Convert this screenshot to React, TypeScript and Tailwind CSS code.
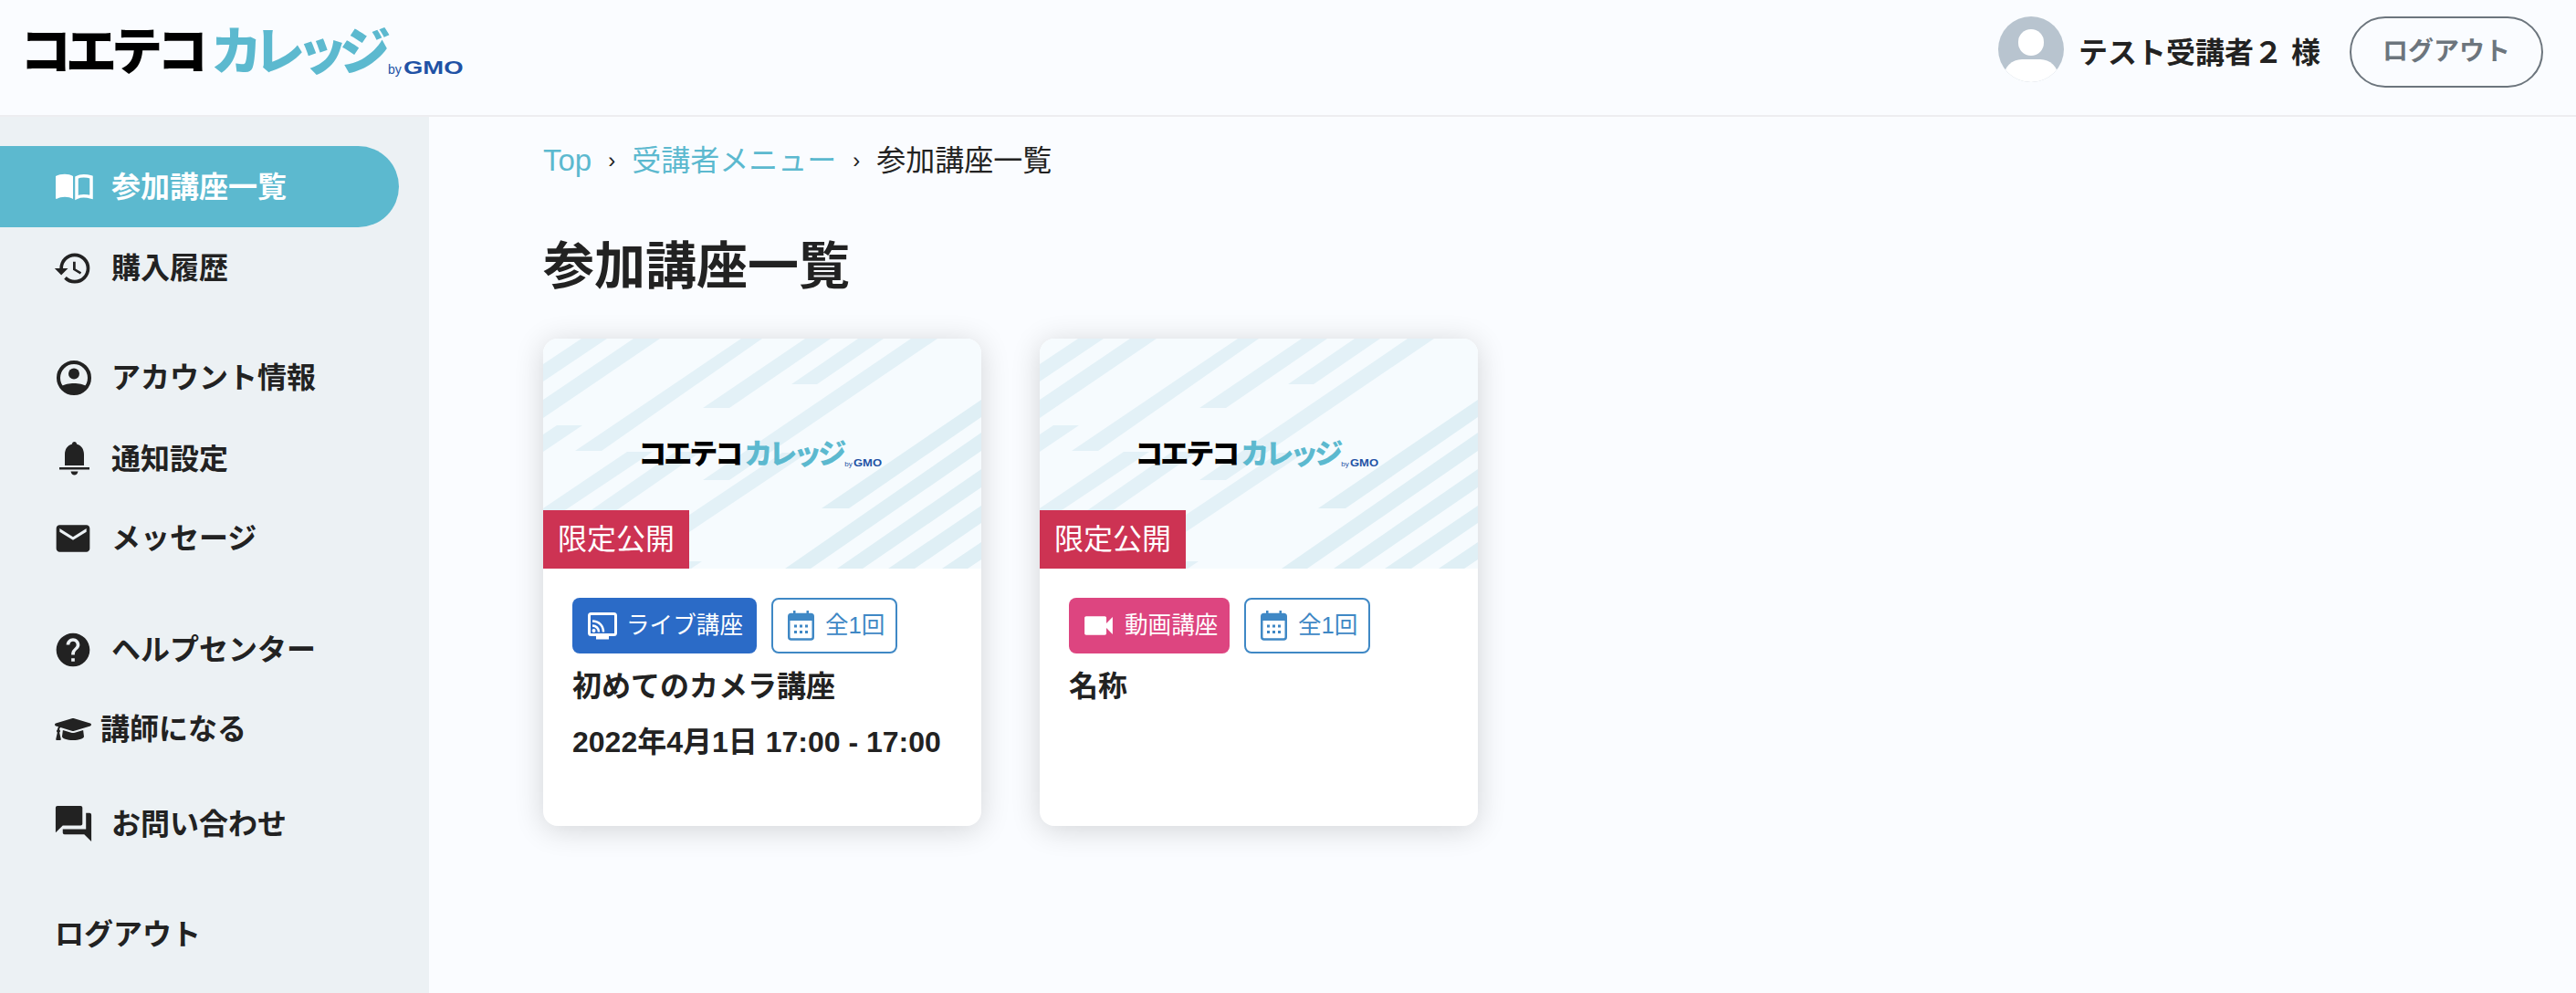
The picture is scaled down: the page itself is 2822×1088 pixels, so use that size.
import { MdHistory, MdEmail, MdHelp, MdForum, MdVideocam } from "react-icons/md";
import { FaGraduationCap } from "react-icons/fa";

function BookIcon() {
  return (
    <svg width="41" height="30" viewBox="0 0 41 30" className="shrink-0" aria-hidden="true">
      <path d="M0 3C6 0 14 0 19 3V28C14 25 6 25 1 28Q0 28 0 27Z" fill="#fff" />
      <path d="M23 4.5C27 2.5 33 2.5 39 4V26C33 24.500 27 24.500 23 26.500Z" fill="none" stroke="#fff" strokeWidth="3.500" />
    </svg>
  );
}

function AccountIcon() {
  return (
    <svg width="38" height="38" viewBox="0 0 38 38" className="shrink-0" fill="#222" aria-hidden="true">
      <circle cx="19" cy="19" r="17" fill="none" stroke="#222" strokeWidth="4" />
      <circle cx="19" cy="14.500" r="6" />
      <path d="M6 28C11 24 27 24 32 28C29 33 24 36 19 36C14 36 9 33 6 28Z" />
    </svg>
  );
}

function BellIcon() {
  return (
    <svg width="33" height="37" viewBox="0 0 33 37" className="shrink-0" fill="#222" aria-hidden="true">
      <path d="M16.500 0C18 0 19 1 19 2.500C24 4 27 8 27 14V26H6V14C6 8 9 4 14 2.500C14 1 15 0 16.500 0Z" />
      <rect x="0" y="28" width="33" height="2.500" />
      <path d="M12.500 32.500H20.500C20 35 18.500 36.500 16.500 36.500C14.500 36.500 13 35 12.500 32.500Z" />
    </svg>
  );
}

function CastIcon() {
  return (
    <svg width="32" height="30" viewBox="0 0 32 30" className="shrink-0" aria-hidden="true">
      <rect x="1.500" y="1.500" width="29" height="23" rx="2" fill="none" stroke="#fff" strokeWidth="3" />
      <rect x="9" y="25" width="14" height="4.500" fill="#fff" />
      <circle cx="6.500" cy="20" r="2" fill="#fff" />
      <path d="M5 14.500C9 14.500 12 17.500 12 21.500M5 9.500C12 9.500 17 14.500 17 21.500" fill="none" stroke="#fff" strokeWidth="2.500" />
    </svg>
  );
}

function CalendarIcon() {
  return (
    <svg width="29" height="33" viewBox="0 0 29 33" className="shrink-0" fill="#3f88c5" aria-hidden="true">
      <rect x="1.250" y="4" width="26.500" height="27.500" rx="2.500" fill="none" stroke="#3f88c5" strokeWidth="2.500" />
      <rect x="1" y="5" width="27" height="6" />
      <rect x="6" y="0" width="2.500" height="6" />
      <rect x="20.500" y="0" width="2.500" height="6" />
      <rect x="7" y="15.500" width="3" height="3" />
      <rect x="13" y="15.500" width="3" height="3" />
      <rect x="19" y="15.500" width="3" height="3" />
      <rect x="7" y="22" width="3" height="3" />
      <rect x="13" y="22" width="3" height="3" />
      <rect x="19" y="22" width="3" height="3" />
    </svg>
  );
}

function Logo({ small }: { small?: boolean }) {
  if (small) {
    return (
      <div className="flex items-end font-black leading-none whitespace-nowrap ml-[-2px]">
        <span className="text-[31px] tracking-[-3px] text-black">コエテコ</span>
        <span className="text-[31px] tracking-[-4px] text-[#5cb9cf] ml-[4px]">カレッジ</span>
        <span className="text-[8px] text-[#1f52a5] font-normal ml-[2px]">by</span>
        <span className="text-[10px] text-[#1f52a5] font-bold ml-[1px] w-[34px] scale-x-[1.3] origin-left">GMO</span>
      </div>
    );
  }
  return (
    <div className="flex items-end font-black leading-none whitespace-nowrap">
      <span className="text-[56px] tracking-[-6px] text-black">コエテコ</span>
      <span className="text-[56px] tracking-[-9px] text-[#5cb9cf] ml-[9px]">カレッジ</span>
      <span className="text-[14px] text-[#1f52a5] font-normal ml-[6px] mb-[2px]">by</span>
      <span className="text-[20px] text-[#1f52a5] font-bold ml-[2px] mb-[1px] w-[66px] scale-x-[1.37] origin-left">GMO</span>
    </div>
  );
}

// 背景のストライプ
function Thumbnail() {
  return (
    <svg viewBox="0 0 480 252" className="absolute inset-0 w-full h-full" aria-hidden="true">
      <rect width="480" height="252" fill="#f6fbfe" />
      <g fill="#e3f1f7">
        <polygon points="0,28 42,0 70,0 0,47" />
        <polygon points="0,67 99,0 128,0 0,87" />
        <polygon points="0,105 15,95 43,95 0,124" />
        <polygon points="35,123 217,0 240,0 64,123" />
        <polygon points="175,76 287,0 315,0 204,76" />
        <polygon points="272,50 345,0 373,0 300,50" />
        <polygon points="0,186 92,124 120,124 0,204" />
        <polygon points="-40,252 145,124 173,124 -12,252" />
        <polygon points="175,155 403,0 432,0 204,155" />
        <polygon points="72,252 262,125 290,125 100,252" />
        <polygon points="135,252 147,244 174,244 162,252" />
      </g>
      <g fill="#dfeff5">
        <polygon points="305,186 480,67 480,86 335,186" />
        <polygon points="265,252 480,103 480,123 293,252" />
        <polygon points="322,252 480,143 480,163 350,252" />
        <polygon points="378,252 480,183 480,202 407,252" />
        <polygon points="437,252 480,223 480,242 465,252" />
      </g>
    </svg>
  );
}

function CourseCard({ kind, title, date }: { kind: "live" | "video"; title: string; date?: string }) {
  return (
    <div className="w-[480px] h-[534px] bg-white rounded-[16px] overflow-hidden shadow-[0_4px_32px_rgba(0,0,0,0.16)]">
      <div className="relative h-[252px] overflow-hidden">
        <Thumbnail />
        <div className="absolute inset-0 flex items-center justify-center">
          <Logo small />
        </div>
        <div className="absolute left-0 bottom-0 h-[64px] w-[160px] bg-[#cd3353] text-white text-[32px] flex items-center justify-center">
          限定公開
        </div>
      </div>
      <div className="p-[32px]">
        <div className="flex gap-[16px]">
          {kind === "live" ? (
            <div className="h-[61px] w-[202px] bg-[#2b6bc7] rounded-[8px] text-white text-[25.6px] flex items-center pl-[17px] gap-[10px]">
              <CastIcon />
              ライブ講座
            </div>
          ) : (
            <div className="h-[61px] w-[176px] bg-[#dd4580] rounded-[8px] text-white text-[25.6px] flex items-center pl-[12px] gap-[8px]">
              <MdVideocam size={41} className="shrink-0" />
              動画講座
            </div>
          )}
          <div className="h-[61px] w-[138px] border-2 border-[#3f88c5] rounded-[8px] text-[#3f88c5] text-[25.6px] flex items-center pl-[16px] gap-[12px]">
            <CalendarIcon />
            全1回
          </div>
        </div>
        <div className="mt-[16px] text-[32px] font-bold text-[#222] leading-[40px]">{title}</div>
        {date && <div className="mt-[21px] text-[32px] font-bold text-[#222] leading-[40px]">{date}</div>}
      </div>
    </div>
  );
}

export default function App() {
  return (
    <div className="min-h-[1088px] bg-[#fafcff] text-[#222] font-['Liberation_Sans','Noto_Sans_CJK_JP',sans-serif] flex flex-col">
      <header className="h-[128px] border-b-2 border-[#ededf0] flex items-center justify-between pl-[22px] pr-[36px] pb-[12px]">
        <Logo />
        <div className="flex items-center">
          <div className="relative w-[72px] h-[72px] -mt-[6px] rounded-full bg-[#b8c4cf] overflow-hidden">
            <div className="absolute left-[22px] top-[14px] w-[28px] h-[29px] rounded-full bg-white" />
            <div className="absolute left-[6px] top-[47px] w-[60px] h-[40px] rounded-full bg-white" />
          </div>
          <div className="ml-[16px] mt-[2px] text-[32px] font-bold">テスト受講者２ 様</div>
          <button className="ml-[32px] w-[212px] h-[78px] border-2 border-[#6c757d] rounded-full text-[#6c757d] text-[28px] font-bold">ログアウト</button>
        </div>
      </header>
      <div className="flex flex-1">
        <aside className="w-[470px] bg-[#ecf1f4] pt-[32px] pb-[16px] pr-[33px] text-[32px] font-bold">
          <div className="h-[89px] bg-[#5cb9cf] rounded-r-full text-white flex items-center pl-[61px] gap-[20px]">
            <BookIcon />
            参加講座一覧
          </div>
          <div className="h-[89px] flex items-center pl-[58px] gap-[20px]">
            <MdHistory size={44} className="shrink-0" />
            購入履歴
          </div>
          <div className="h-[89px] mt-[31px] flex items-center pl-[62px] gap-[22px]">
            <AccountIcon />
            アカウント情報
          </div>
          <div className="h-[89px] flex items-center pl-[65px] gap-[24px]">
            <BellIcon />
            通知設定
          </div>
          <div className="h-[89px] -mt-[2px] flex items-center pl-[58px] gap-[20px]">
            <MdEmail size={44} className="shrink-0" />
            メッセージ
          </div>
          <div className="h-[89px] mt-[33px] flex items-center pl-[58px] gap-[20px]">
            <MdHelp size={44} className="shrink-0" />
            ヘルプセンター
          </div>
          <div className="h-[89px] -mt-[2px] flex items-center pl-[60px] gap-[10px]">
            <FaGraduationCap size={40} className="shrink-0" />
            講師になる
          </div>
          <div className="h-[89px] mt-[15px] flex items-center pl-[57px] gap-[18px]">
            <MdForum size={47} className="shrink-0" />
            お問い合わせ
          </div>
          <div className="h-[89px] mt-[32px] flex items-center pl-[60px]">ログアウト</div>
        </aside>
        <main className="flex-1 pl-[125px] pt-[28px]">
          <nav className="flex items-center text-[32px] leading-[40px]">
            <span className="text-[#5cb9cf] text-[33px]">Top</span>
            <span className="mx-[18px] text-[24px]">›</span>
            <span className="text-[#5cb9cf]">受講者メニュー</span>
            <span className="mx-[18px] text-[24px]">›</span>
            <span>参加講座一覧</span>
          </nav>
          <h1 className="mt-[60px] text-[56px] font-bold leading-[72px]">参加講座一覧</h1>
          <div className="mt-[43px] flex gap-[64px]">
            <CourseCard kind="live" title="初めてのカメラ講座" date="2022年4月1日 17:00 - 17:00" />
            <CourseCard kind="video" title="名称" />
          </div>
        </main>
      </div>
    </div>
  );
}
